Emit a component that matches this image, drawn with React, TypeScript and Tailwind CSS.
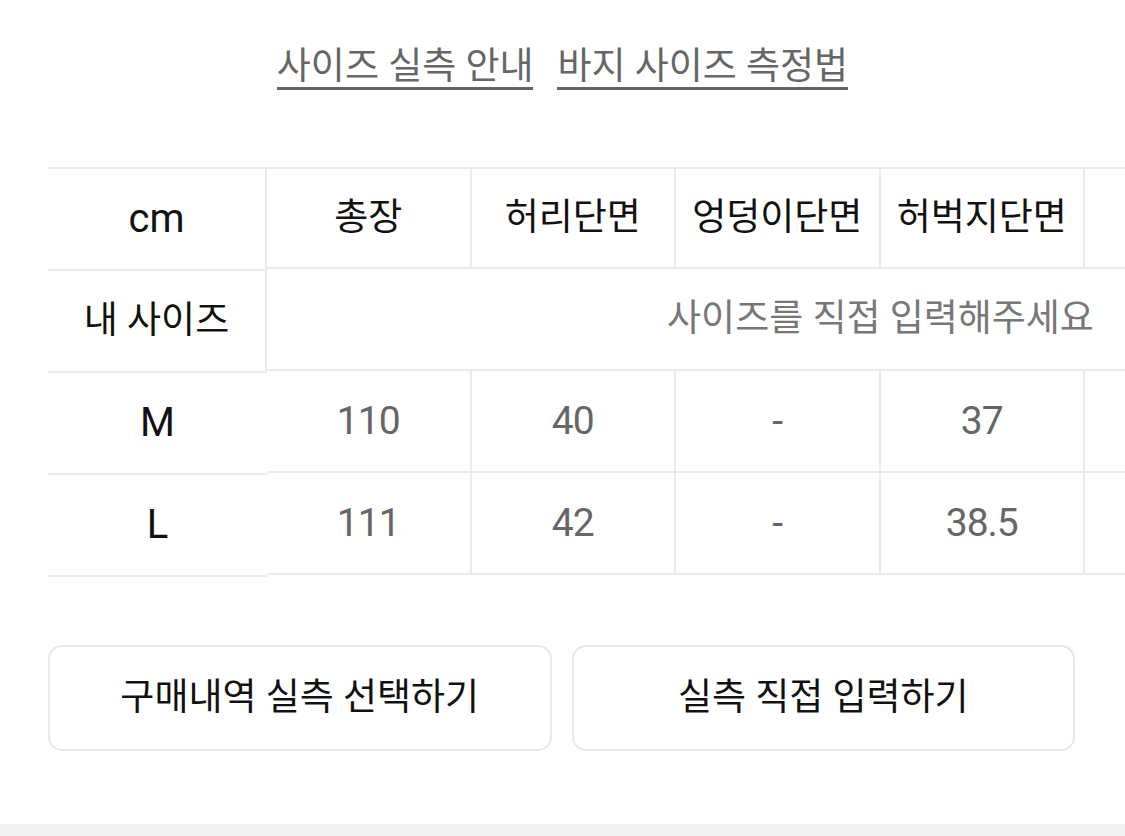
import React from "react";

const FONT = { fontFamily: 'Roboto, "Noto Sans CJK KR", "Noto Sans", sans-serif' };

const headers = ["총장", "허리단면", "엉덩이단면", "허벅지단면", "", ""];
const rows = [
  { size: "M", values: ["110", "40", "-", "37", "", ""] },
  { size: "L", values: ["111", "42", "-", "38.5", "", ""] },
];

export default function App() {
  return (
    <div className="h-[836px] w-[1125px] bg-white flex flex-col overflow-hidden text-[37px]" style={FONT}>
      <div className="flex justify-center gap-[24px] pt-[38px]">
        <span className="inline-block pt-[9px] leading-[40px] border-b-[3px] border-[#666666] text-[#666666]">사이즈 실측 안내</span>
        <span className="inline-block pt-[9px] leading-[40px] border-b-[3px] border-[#666666] text-[#666666]">바지 사이즈 측정법</span>
      </div>

      <div className="mt-[77px] ml-[48px] overflow-hidden">
        <div className="flex">
          {/* fixed first column */}
          <div className="w-[219px] shrink-0 flex flex-col border-t-2 border-[#ebebeb]">
            <div className="h-[102px] flex items-center justify-center border-b-2 border-r-2 border-[#ebebeb] text-[#111111] text-[40px]">cm</div>
            <div className="h-[102px] flex items-center justify-center border-b-2 border-r-2 border-[#ebebeb] text-[#111111]">내 사이즈</div>
            {rows.map((r) => (
              <div key={r.size} className="h-[102px] flex items-center justify-center border-b-2 border-[#ebebeb] text-[#111111] text-[40px]">
                {r.size}
              </div>
            ))}
          </div>
          {/* scrolling part */}
          <div className="flex flex-col shrink-0 border-t-2 border-[#ebebeb]">
            <div className="flex h-[100px] border-b-2 border-[#ebebeb]">
              {headers.map((h, i) => (
                <div key={i} className="w-[204.5px] shrink-0 flex items-center justify-center border-r-2 border-[#ebebeb] text-[#111111]">
                  {h}
                </div>
              ))}
            </div>
            <div className="flex h-[102px] border-b-2 border-[#ebebeb] items-center justify-center text-[#777777]">
              사이즈를 직접 입력해주세요
            </div>
            {rows.map((r) => (
              <div key={r.size} className="flex h-[102px] border-b-2 border-[#ebebeb]">
                {r.values.map((v, i) => (
                  <div key={i} className="w-[204.5px] shrink-0 flex items-center justify-center border-r-2 border-[#ebebeb] text-[#666666] text-[39px] tracking-[-1px]">
                    {v}
                  </div>
                ))}
              </div>
            ))}
          </div>
        </div>
      </div>

      <div className="flex gap-[20px] pl-[48px] pr-[50px] mt-[68px]">
        <button className="flex-1 h-[106px] rounded-[14px] border-2 border-[#e8e8e8] bg-white text-[#111111] flex items-center justify-center">
          구매내역 실측 선택하기
        </button>
        <button className="flex-1 h-[106px] rounded-[14px] border-2 border-[#e8e8e8] bg-white text-[#111111] flex items-center justify-center">
          실측 직접 입력하기
        </button>
      </div>

      <div className="mt-auto h-[12px] bg-[#f3f3f3]" />
    </div>
  );
}
